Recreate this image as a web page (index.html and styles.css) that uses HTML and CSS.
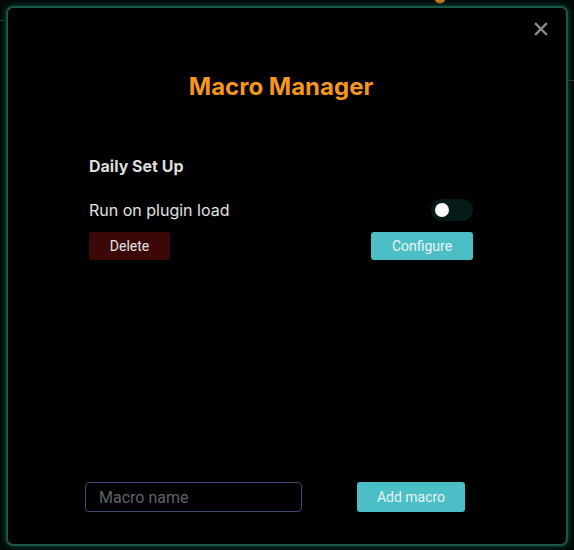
FILE: index.html
```html
<!DOCTYPE html>
<html>
<head>
<meta charset="utf-8">
<link rel="stylesheet" href="styles.css">
</head>
<body>
<div class="backdrop">
  <div class="modal">
    <button class="close" aria-label="Close">
      <svg width="14" height="14" viewBox="0 0 14 14"><path d="M2 2 L12 12 M12 2 L2 12" stroke="#8a8a8a" stroke-width="2.4" stroke-linecap="square"/></svg>
    </button>
    <h1 class="title">Macro Manager</h1>
    <div class="macro">
      <div class="macro-name">Daily Set Up</div>
      <div class="row">
        <span class="label">Run on plugin load</span>
        <span class="toggle"><span class="knob"></span></span>
      </div>
      <div class="row actions">
        <button class="btn btn-delete">Delete</button>
        <button class="btn btn-primary btn-configure">Configure</button>
      </div>
    </div>
    <div class="footer">
      <input class="name-input" type="text" placeholder="Macro name">
      <button class="btn btn-primary btn-add">Add macro</button>
    </div>
  </div>
</div>
</body>
</html>
```
FILE: styles.css
```css
html, body {
  margin: 0;
  padding: 0;
}
body {
  width: 574px;
  height: 550px;
  overflow: hidden;
  background:
    radial-gradient(circle at 440px -2px, #c77a1c 0 5px, transparent 6px),
    linear-gradient(#24404c, #24404c) 0 20px / 8px 1px no-repeat,
    linear-gradient(#24404c, #24404c) 566px 80px / 8px 1px no-repeat,
    #020908;
  font-family: Inter, "Noto Sans", sans-serif;
}
.backdrop {
  padding: 6px 6px 4px 6px;
  box-sizing: border-box;
  height: 550px;
}
.modal {
  position: relative;
  height: 540px;
  box-sizing: border-box;
  background: #000;
  border: 2px solid #1b5648;
  border-radius: 7px;
  box-shadow: 0 0 5px 1px #0d3d33;
  display: flex;
  flex-direction: column;
}
.close {
  position: absolute;
  top: 14px;
  right: 18px;
  background: none;
  border: none;
  padding: 0;
  width: 14px;
  height: 14px;
  display: flex;
}
.title {
  margin: 62px 0 0 0;
  text-align: center;
  padding-right: 12px;
  font-family: Inter, Roboto, sans-serif;
  font-weight: 700;
  font-size: 24px;
  line-height: 34px;
  color: #f7961f;
}
.macro {
  margin: 52px 0 0 81px;
  width: 384px;
}
.macro-name {
  font-size: 16px;
  font-weight: 700;
  color: #dcdcdc;
  line-height: 20px;
}
.row {
  display: flex;
  justify-content: space-between;
  align-items: center;
}
.macro .row:not(.actions) {
  margin-top: 23px;
  height: 22px;
}
.label {
  font-size: 16px;
  color: #e2e2e2;
}
.toggle {
  width: 42px;
  height: 22px;
  border-radius: 11px;
  background: #051a19;
  display: flex;
  align-items: center;
  padding: 0 4px;
  box-sizing: border-box;
}
.knob {
  width: 14px;
  height: 14px;
  border-radius: 50%;
  background: #fff;
}
.actions {
  margin-top: 11px;
}
.btn {
  font-family: Roboto, "Noto Sans", sans-serif;
  font-size: 14px;
  border: none;
  border-radius: 3px;
  height: 28px;
  padding: 0;
  color: #e4e4e4;
}
.btn-delete {
  width: 81px;
  background: #3b0707;
}
.btn-primary {
  background: #4bbfc5;
  color: #e9f5f5;
}
.btn-configure {
  width: 102px;
}
.footer {
  margin-top: auto;
  margin-bottom: 32px;
  margin-left: 77px;
  display: flex;
  align-items: center;
}
.name-input {
  width: 217px;
  height: 30px;
  box-sizing: border-box;
  background: #000;
  border: 1px solid #3a4a74;
  border-radius: 4px;
  padding: 0 13px;
  font-family: Roboto, "Noto Sans", sans-serif;
  font-size: 16px;
  color: #ddd;
  outline: none;
}
.name-input::placeholder {
  color: #5f636e;
}
.btn-add {
  margin-left: 55px;
  width: 108px;
  height: 30px;
}
```
